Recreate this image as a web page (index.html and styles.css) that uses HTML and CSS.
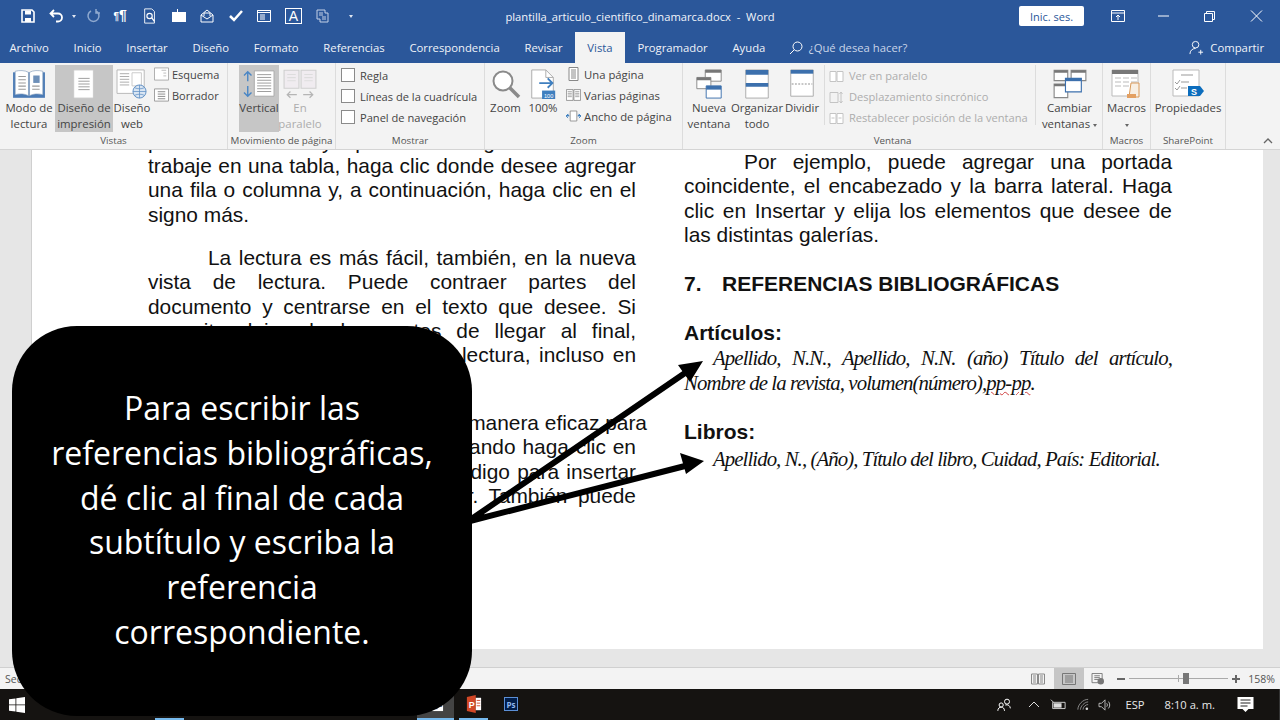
FILE: index.html
```html
<!DOCTYPE html>
<html lang="es">

<head>
    <meta charset="UTF-8">
    <title>plantilla_articulo_cientifico_dinamarca.docx - Word</title>
    <link rel="stylesheet" href="styles.css">
</head>

<body>
    <div class="window">
        <!-- Title bar -->
        <div class="titlebar">
            <div class="qat">
                <svg viewBox="0 0 16 16"><path d="M2 2h10l2 2v10H2z" fill="none" stroke="#fff" stroke-width="1.6"/><path d="M5 2.500h6v4H5zM5 10h6v4H5z" fill="#fff"/></svg>
                <svg viewBox="0 0 16 16"><path d="M5 2 1.500 5.500 5 9M2 5.500h7a4 4 0 0 1 0 8H7" fill="none" stroke="#fff" stroke-width="1.800"/></svg>
                <span class="qat-caret"></span>
                <svg class="dim" viewBox="0 0 16 16"><path d="M6 3a5.500 5.500 0 1 0 5 0M11 1v4h4" fill="none" stroke="#8fa9cf" stroke-width="1.500"/></svg>
                <span class="qat-pilcrow"><i>¶</i>¶</span>
                <svg viewBox="0 0 16 18"><path d="M2 1h8l3 3v13H2z" fill="none" stroke="#fff"/><circle cx="7.500" cy="9" r="3" fill="none" stroke="#fff" stroke-width="1.300"/><path d="m10 11 3 4" stroke="#fff" stroke-width="1.500"/></svg>
                <svg viewBox="0 0 16 16"><path d="M1 4h5V1h1v3h8v10H1z" fill="#fff"/></svg>
                <svg viewBox="0 0 16 16"><path d="M2 7l6-5 6 5v7H2zM2 7l6 4 6-4M5 8V5h6v3" fill="none" stroke="#fff"/></svg>
                <svg viewBox="0 0 16 16"><path d="m2 8 4 4 8-9" fill="none" stroke="#fff" stroke-width="2.500"/></svg>
                <svg viewBox="0 0 16 16"><path d="M1.500 2.500h13v11h-13z" fill="none" stroke="#fff"/><path d="M1.500 2.500h13v2h-13zM4 7h5M4 9h5M4 11h5" fill="none" stroke="#fff"/></svg>
                <span class="qat-letter">A</span>
                <svg class="dim" viewBox="0 0 16 16"><path d="M2 2h8v3h3v9H5v-3H2zM4 5h4M4 7h4M7 9h4M7 11h4" fill="none" stroke="#c4d1e6"/></svg>
                <span class="qat-caret more"></span>
            </div>
            <div class="doc-title">plantilla_articulo_cientifico_dinamarca.docx &nbsp;-&nbsp; Word</div>
            <div class="win-controls">
                <button class="signin">Inic. ses.</button>
                <svg class="win-btn first" viewBox="0 0 14 12"><path d="M.5.500h13v11H.5zM.5 3h13M7 10V5M5 7l2-2 2 2" fill="none" stroke="#fff"/></svg>
                <svg class="win-btn" viewBox="0 0 14 12"><path d="M1 6h11" stroke="#fff"/></svg>
                <svg class="win-btn" viewBox="0 0 14 12"><path d="M1.500 3.500h8v8h-8zM3.500 3.500v-2h8v8h-2" fill="none" stroke="#fff"/></svg>
                <svg class="win-btn" viewBox="0 0 14 12"><path d="m2 .500 11 11M13 .500l-11 11" stroke="#fff"/></svg>
            </div>
        </div>

        <!-- Tabs -->
        <div class="tabs">
            <span class="tab">Archivo</span>
            <span class="tab">Inicio</span>
            <span class="tab">Insertar</span>
            <span class="tab">Diseño</span>
            <span class="tab">Formato</span>
            <span class="tab">Referencias</span>
            <span class="tab">Correspondencia</span>
            <span class="tab">Revisar</span>
            <span class="tab active">Vista</span>
            <span class="tab">Programador</span>
            <span class="tab">Ayuda</span>
            <svg class="search-icon" viewBox="0 0 14 14"><circle cx="8.500" cy="5.500" r="4.500" fill="none" stroke="#fff"/><path d="M5.300 8.700 1 13" stroke="#fff"/></svg>
            <span class="search-text">¿Qué desea hacer?</span>
            <span class="share">
                <svg viewBox="0 0 16 16"><circle cx="7" cy="5" r="3.500" fill="none" stroke="#fff"/><path d="M1 15c0-3.500 2.500-6 6-6M10 13h5M12.500 10.500v5" fill="none" stroke="#fff"/></svg>
                Compartir
            </span>
        </div>

        <!-- Ribbon -->
        <div class="ribbon">
            <div class="group g-vistas">
                <div class="group-body">
                    <div class="big w-52">
                        <svg class="icon" viewBox="0 0 32 28"><path d="M1 3h30v24H1z" fill="#4a7ab5"/><path d="M3 2c4-1 9-1 12.500 1v22C12 23 7 23 3 24zM29 2c-4-1-9-1-12.500 1v22c3.500-2 8.500-2 12.500-1z" fill="#fff" stroke="#7f9ab9" stroke-width=".6"/><path d="M6 7h7M6 10h7M6 13h7M6 16h7M6 19h7" stroke="#999"/><path d="M20 6h6v7h-6z" fill="#6d8fb8"/><path d="M19 16h7M19 19h7" stroke="#999"/></svg>
                        <span class="label">Modo de<br>lectura</span>
                    </div>
                    <div class="big w-58 on">
                        <svg class="icon" viewBox="0 0 32 32"><path d="M5 1h21v30H5z" fill="#fff" stroke="#c9c9c9"/><path d="M10 10h12M10 13h12M10 16h12M10 19h12M10 22h12" stroke="#9a9a9a"/></svg>
                        <span class="label">Diseño de<br>impresión</span>
                    </div>
                    <div class="big w-38">
                        <svg class="icon" viewBox="0 0 34 32"><path d="M1 1h29v25H1z" fill="#fff" stroke="#b5b5b5"/><path d="M17 4h10v14H17z" fill="#fff" stroke="#c9c9c9"/><path d="M4 5h10M4 8h10M4 11h10M4 14h10M4 17h10" stroke="#aaa"/><circle cx="25" cy="24" r="7" fill="#d9e5f2" stroke="#5f8fc4"/><path d="M18 24h14M25 17v14M20 20c3 1.500 7 1.500 10 0M20 28c3-1.500 7-1.500 10 0" fill="none" stroke="#5f8fc4" stroke-width=".8"/></svg>
                        <span class="label">Diseño<br>web</span>
                    </div>
                    <div class="small-col outline-col">
                        <div class="small">
                            <svg viewBox="0 0 16 14"><path d="M.5.500h15v13H.5z" fill="#fff" stroke="#aaa"/><path d="M8 3h5M10 6h3M10 9h3" stroke="#bbb"/></svg>
                            Esquema
                        </div>
                        <div class="small">
                            <svg viewBox="0 0 16 14"><path d="M.5.500h15v13H.5z" fill="#fff" stroke="#999"/><path d="M4 3.500h8M4 6h8M4 8.500h8M4 11h8" stroke="#888"/></svg>
                            Borrador
                        </div>
                    </div>
                </div>
                <div class="group-name">Vistas</div>
            </div>

            <div class="group g-mov">
                <div class="group-body">
                    <div class="big w-40 on">
                        <svg class="icon" viewBox="0 0 36 32"><path d="M13 2h21v27H13z" fill="#fff" stroke="#aaa"/><path d="M16 6h15M16 9h15M16 12h15M16 15h15M16 18h15M16 21h15M16 24h15" stroke="#999"/><path d="M6 13V3M2 7l4-4 4 4" fill="none" stroke="#4a86c5" stroke-width="1.500"/><path d="M6 18v11M2 25l4 4 4-4" fill="none" stroke="#4a86c5" stroke-width="1.500"/></svg>
                        <span class="label">Vertical</span>
                    </div>
                    <div class="big w-42 off">
                        <svg class="icon" viewBox="0 0 32 28"><path d="M1 1h14v17H1zM17 1h14v17H17z" fill="#f0ecf0" stroke="#cfcfcf"/><path d="M4 5h8M4 8h8M4 11h8M20 5h8M20 8h8M20 11h8" stroke="#ddd"/><path d="M4 24h9M7 21l-3 3 3 3M19 24h9M25 21l3 3-3 3" fill="none" stroke="#b5b5b5" stroke-width="1.200"/></svg>
                        <span class="label">En<br>paralelo</span>
                    </div>
                </div>
                <div class="group-name">Movimiento de página</div>
            </div>

            <div class="group g-mostrar">
                <div class="group-body checks">
                    <label class="check"><i></i>Regla</label>
                    <label class="check"><i></i>Líneas de la cuadrícula</label>
                    <label class="check"><i></i>Panel de navegación</label>
                </div>
                <div class="group-name">Mostrar</div>
            </div>

            <div class="group g-zoom">
                <div class="group-body">
                    <div class="big w-37">
                        <svg class="icon" viewBox="0 0 30 30"><circle cx="12" cy="12" r="9.500" fill="#fff" stroke="#8a8a8a" stroke-width="2"/><path d="m19 19 9 9" stroke="#8a8a8a" stroke-width="3.500"/></svg>
                        <span class="label">Zoom</span>
                    </div>
                    <div class="big w-38">
                        <svg class="icon" viewBox="0 0 28 32"><path d="M2 1h15l8 8v22H2z" fill="#fff" stroke="#aaa"/><path d="M17 1v8h8" fill="none" stroke="#aaa"/><path d="M10 15h14M19 10l5 5-5 5" fill="none" stroke="#3f7fbf" stroke-width="2"/><path d="M13 23h14v9H13z" fill="#3f7fbf"/><text x="20" y="30.500" class="zoom-num">100</text></svg>
                        <span class="label">100%</span>
                    </div>
                    <div class="small-col zoom-col">
                        <div class="small">
                            <svg viewBox="0 0 14 14"><path d="M2.500.500h9v13h-9z" fill="#fff" stroke="#888"/><path d="M4.500 3h5M4.500 5h5M4.500 7h5M4.500 9h5M4.500 11h5" stroke="#888"/></svg>
                            Una página
                        </div>
                        <div class="small">
                            <svg viewBox="0 0 18 14"><path d="M.5.500h8v13h-8zM9.500.500h8v13h-8z" fill="#fff" stroke="#888"/><path d="M2 3h5M2 5h5M2 7h5M2 9h5M11 3h5M11 5h5M11 7h5M11 9h5" stroke="#999"/></svg>
                            Varias páginas
                        </div>
                        <div class="small">
                            <svg viewBox="0 0 18 14"><path d="M5 1h8v12H5z" fill="#fff" stroke="#888"/><path d="M4 7H0l2.500-2.500M0 7l2.500 2.500M14 7h4l-2.500-2.500M18 7l-2.500 2.500" fill="#3f7fbf" stroke="#3f7fbf"/></svg>
                            Ancho de página
                        </div>
                    </div>
                </div>
                <div class="group-name">Zoom</div>
            </div>

            <div class="group g-ventana">
                <div class="group-body">
                    <div class="big w-44">
                        <svg class="icon" viewBox="0 0 28 32"><path d="M10 1h17v12H10z" fill="#fff" stroke="#888"/><path d="M10 1h17v3H10z" fill="#777"/><path d="M1 9h15v12H1z" fill="#fff" stroke="#888"/><path d="M1 9h15v3H1z" fill="#777"/><path d="M11 18h16v13H11z" fill="#fff" stroke="#3c70ad"/><path d="M11 18h16v4H11z" fill="#3c70ad"/></svg>
                        <span class="label">Nueva<br>ventana</span>
                    </div>
                    <div class="big w-52">
                        <svg class="icon" viewBox="0 0 26 32"><path d="M1 1h24v30H1z" fill="#fff" stroke="#aaa"/><path d="M1 1h24v5H1zM1 15h24v4H1z" fill="#3c70ad"/></svg>
                        <span class="label">Organizar<br>todo</span>
                    </div>
                    <div class="big w-38">
                        <svg class="icon" viewBox="0 0 26 32"><path d="M1 1h24v28H1z" fill="#fff" stroke="#aaa"/><path d="M1 1h24v4H1z" fill="#3c70ad"/><path d="M2 16h22" stroke="#888" stroke-dasharray="2 1.500"/></svg>
                        <span class="label">Dividir</span>
                    </div>
                    <div class="small-col side-by-side">
                        <div class="small off">
                            <svg viewBox="0 0 14 14"><path d="M.5 2.500h6v10h-6zM7.500 2.500h6v10h-6z" fill="#fff" stroke="#c4c4c4"/></svg>
                            Ver en paralelo
                        </div>
                        <div class="small off">
                            <svg viewBox="0 0 14 14"><path d="M.5 2.500h8v10h-8zM11.500 2v11M10 4l1.500-2L13 4M10 11l1.500 2 1.500-2" fill="none" stroke="#c4c4c4"/></svg>
                            Desplazamiento sincrónico
                        </div>
                        <div class="small off">
                            <svg viewBox="0 0 14 14"><path d="M.5 2.500h6v10h-6zM7.500 2.500h6v10h-6zM2 7h3M12 7H9" fill="#fff" stroke="#c4c4c4"/></svg>
                            Restablecer posición de la ventana
                        </div>
                    </div>
                    <div class="big w-65 switch">
                        <svg class="icon" viewBox="0 0 30 26"><path d="M1 1h12v9H1zM16 1h13v9H16zM1 13h12v12H1z" fill="#fff" stroke="#888"/><path d="M1 1h12v2H1zM16 1h13v2H16zM1 13h12v2H1z" fill="#777"/><path d="M11 8h14v12H11z" fill="#fff" stroke="#3c70ad"/><path d="M11 8h14v2.500H11z" fill="#3c70ad"/></svg>
                        <span class="label">Cambiar<br>ventanas <b class="caret"></b></span>
                    </div>
                </div>
                <div class="group-name">Ventana</div>
            </div>

            <div class="group g-macros">
                <div class="group-body">
                    <div class="big w-48">
                        <svg class="icon" viewBox="0 0 32 30"><path d="M1 1h26v26H1z" fill="#fff" stroke="#bbb"/><path d="M1 1h26v4H1z" fill="#777"/><path d="M4 9h6M12 9h6M20 9h6M4 13h6M12 13h6M20 13h6M4 17h6M12 17h6" stroke="#bbb"/><path d="M20 14h8v14h-10z" fill="#f7efe4" stroke="#d99a5a"/><path d="M16 25h9v4h-9z" fill="#e3a062"/></svg>
                        <span class="label">Macros<br><b class="caret"></b></span>
                    </div>
                </div>
                <div class="group-name">Macros</div>
            </div>

            <div class="group g-share">
                <div class="group-body">
                    <div class="big w-66">
                        <svg class="icon" viewBox="0 0 32 30"><path d="M1 1h26v26H1z" fill="#fff" stroke="#bbb"/><path d="M9 6h12M9 13h8M9 19h6M3 13l2 2 3-4M3 19l2 2 3-4" fill="none" stroke="#999"/><path d="M16 17h12l4 5-4 5H16z" fill="#0c6dbd"/><text x="22" y="26" class="sp-letter">S</text></svg>
                        <span class="label">Propiedades</span>
                    </div>
                </div>
                <div class="group-name">SharePoint</div>
            </div>

            <svg class="collapse" viewBox="0 0 10 6"><path d="m1 5 4-4 4 4" fill="none" stroke="#666" stroke-width="1.300"/></svg>
        </div>

        <!-- Document -->
        <div class="doc-area">
            <div class="page">
                <div class="col col-left">
                    <div class="ln">puede hacer clic y aparecerá un gráfico. Cuando</div>
                    <div class="ln">trabaje en una tabla, haga clic donde desee agregar</div>
                    <div class="ln">una fila o columna y, a continuación, haga clic en el</div>
                    <div class="ln end">signo más.</div>
                    <div class="ln first para">La lectura es más fácil, también, en la nueva</div>
                    <div class="ln">vista de lectura. Puede contraer partes del</div>
                    <div class="ln">documento y centrarse en el texto que desee. Si</div>
                    <div class="ln">necesita dejar de leer antes de llegar al final,</div>
                    <div class="ln">Word le recuerda dónde dejó la lectura, incluso en</div>
                    <div class="ln end">otro dispositivo.</div>
                    <div class="ln first para">El vídeo le proporciona una manera eficaz para</div>
                    <div class="ln">ayudarle a demostrar el punto. Cuando haga clic en</div>
                    <div class="ln">Vídeo en línea, puede pegar el código para insertar</div>
                    <div class="ln">para el vídeo que desea agregar. También puede</div>
                </div>
                <div class="col col-right">
                    <div class="ln first">Por ejemplo, puede agregar una portada</div>
                    <div class="ln">coincidente, el encabezado y la barra lateral. Haga</div>
                    <div class="ln">clic en Insertar y elija los elementos que desee de</div>
                    <div class="ln end">las distintas galerías.</div>
                    <h2 class="heading"><span class="heading-num">7.</span>REFERENCIAS BIBLIOGRÁFICAS</h2>
                    <h3 class="subheading">Artículos:</h3>
                    <div class="ref ref-first">Apellido, N.N., Apellido, N.N. (año) Título del artículo,</div>
                    <div class="ref ref-tight">Nombre de la revista, volumen(número),<span class="squiggle">pp-pp</span>.</div>
                    <h3 class="subheading books">Libros:</h3>
                    <div class="ref ref-book">Apellido, N., (Año), Título del libro, Cuidad, País: Editorial.</div>
                </div>
            </div>
        </div>

        <!-- Status bar -->
        <div class="statusbar">
            <span class="status-left">Sección: 2</span>
            <div class="status-right">
                <svg class="view" viewBox="0 0 14 12"><path d="M.5 1h6v10h-6zM7.500 1h6v10h-6zM2 3h3M2 5h3M2 7h3M2 9h3M9 3h3M9 5h3M9 7h3M9 9h3" fill="none" stroke="#8a8a8a"/></svg>
                <span class="view-on"><svg class="view" viewBox="0 0 14 12"><path d="M.5.500h13v11H.5zM3 3h8M3 5h8M3 7h8M3 9h8" fill="none" stroke="#777"/></svg></span>
                <svg class="view" viewBox="0 0 14 13"><path d="M.5.500h11v10H.5zM3 3h6M3 5h6M3 7h4" fill="none" stroke="#777"/><circle cx="10" cy="9" r="3.500" fill="#777"/></svg>
                <div class="zoom-slider">
                    <span class="zoom-minus"></span>
                    <span class="zoom-track"><i class="zoom-tick"></i><i class="zoom-thumb"></i></span>
                    <span class="zoom-plus"></span>
                </div>
                <span class="zoom-value">158%</span>
            </div>
        </div>

        <!-- Taskbar -->
        <div class="taskbar">
            <svg class="start" viewBox="0 0 16 16"><path d="M0 2.300 6.500 1.400V7.500H0zM7.300 1.300 16 0v7.500H7.300zM0 8.300h6.500v6.300L0 13.700zM7.300 8.300H16V16l-8.700-1.300z" fill="#fff"/></svg>
            <div class="task-items">
                <span class="task task-first"></span>
                <span class="task task-word">
                    <svg viewBox="0 0 18 18"><path d="M5 1h12v16H5z" fill="#fff"/><path d="M0 3h11v12H0z" fill="#2b579a"/><path d="M12 6h4M12 9h4M12 12h4" stroke="#2b579a"/></svg>
                </span>
                <span class="task task-ppt">
                    <svg viewBox="0 0 18 20"><path d="M1 2 11 0v20L1 18z" fill="#d24726"/><path d="M11 3h6v14h-6z" fill="#fff"/><path d="M12 6h4M12 9h4M12 12h4" stroke="#d24726"/><text x="3" y="14" class="ppt-letter">P</text></svg>
                </span>
                <span class="task task-ps">Ps</span>
            </div>
            <div class="tray">
                <svg class="tray-people" viewBox="0 0 18 16"><circle cx="12" cy="4" r="3" fill="none" stroke="#fff" stroke-width="1.200"/><circle cx="5" cy="8" r="2.500" fill="none" stroke="#fff" stroke-width="1.200"/><path d="M1 15c0-3 2-4.500 4-4.500s4 1.500 4 4.500M10 8c3-1 6 1 6 4" fill="none" stroke="#fff" stroke-width="1.200"/></svg>
                <svg class="tray-chev" viewBox="0 0 12 7"><path d="m1 6 5-5 5 5" fill="none" stroke="#ddd"/></svg>
                <svg class="tray-batt" viewBox="0 0 18 12"><path d="M3 3h14v7H3z" fill="none" stroke="#ddd"/><path d="M4 4h9v5H4z" fill="#ddd"/><path d="M1 0l3 3" stroke="#ddd"/></svg>
                <svg class="tray-wifi" viewBox="0 0 14 14"><path d="M1 13C1 7 7 1 13 1M4 13c0-4 5-9 9-9M7 13c0-3 3-6 6-6" fill="none" stroke="#999"/><circle cx="11.500" cy="12" r="1.500" fill="#ddd"/></svg>
                <svg class="tray-vol" viewBox="0 0 16 14"><path d="M1 5h3l4-4v12L4 9H1zM10 5c1 1 1 3 0 4M12 3c2 2 2 6 0 8" fill="none" stroke="#ccc"/></svg>
                <span class="tray-lang">ESP</span>
                <span class="tray-time">8:10 a. m.</span>
                <svg class="tray-note" viewBox="0 0 16 15"><path d="M0 0h16v12h-5l-3 3-3-3H0z" fill="#fff"/><path d="M3 3h10M3 6h10M3 9h7" stroke="#222"/></svg>
            </div>
        </div>

        <!-- Callout over the page -->
        <div class="callout">Para escribir las referencias bibliográficas, dé clic al final de cada subtítulo y escriba la referencia correspondiente.</div>
        <svg class="arrows" viewBox="0 0 1280 720">
            <path d="M470 520 685 373M470 521 685 466" stroke="#000" stroke-width="6"/>
            <path d="m703 361-13 21-12-17zM704 461l-18 13-6-21z" fill="#000"/>
        </svg>
    </div>
</body>

</html>
```

FILE: styles.css
```css
* {
    margin: 0;
    padding: 0;
    box-sizing: border-box;
}

body {
    font-family: "Open Sans", "Noto Sans", sans-serif;
    background-color: #e6e6e6;
    overflow: hidden;
}

.window {
    position: relative;
    width: 1280px;
    height: 720px;
    display: flex;
    flex-direction: column;
    overflow: hidden;
}

/* Title bar */
.titlebar {
    height: 32px;
    background-color: #2b579a;
    color: #fff;
    display: grid;
    grid-template-columns: 1fr auto 1fr;
    align-items: center;
}

.qat {
    display: flex;
    align-items: center;
    padding-left: 20px;
    gap: 12.6px;
}

.qat svg {
    width: 16px;
    height: 16px;
}

.qat-caret {
    width: 0;
    height: 0;
    border: 2.5px solid transparent;
    border-top: 3px solid #dfe6f1;
    margin: 3px -4px 0 -5px;
}

.qat-caret.more {
    margin-left: 6px;
}

.qat-pilcrow {
    width: 16px;
    font-family: "Liberation Sans", sans-serif;
    font-size: 14px;
    font-weight: 700;
    line-height: 16px;
    white-space: nowrap;
}

.qat-pilcrow i {
    font-size: 10px;
    font-style: normal;
}

.qat-letter {
    width: 17px;
    height: 16px;
    border: 1px solid #fff;
    font-family: "Liberation Sans", sans-serif;
    font-size: 14px;
    line-height: 14px;
    text-align: center;
}

.doc-title {
    font-size: 11.2px;
    white-space: nowrap;
    color: #f2f5fa;
}

.win-controls {
    display: flex;
    align-items: center;
    justify-content: flex-end;
}

.signin {
    width: 65px;
    height: 20px;
    border: none;
    border-radius: 2px;
    background-color: #fff;
    color: #2b579a;
    font-family: inherit;
    font-size: 11px;
    margin-right: 27px;
}

.win-btn {
    width: 14px;
    height: 12px;
    margin-right: 32px;
}

.win-btn:last-child {
    margin-right: 17px;
}

/* Tabs */
.tabs {
    height: 31px;
    background-color: #2b579a;
    color: #f0f3f8;
    display: flex;
    align-items: stretch;
    font-size: 11.3px;
    line-height: 31px;
}

.tab {
    padding: 0 12.4px;
    white-space: nowrap;
}

.tab:first-child {
    margin-left: -3px;
}

.tab.active {
    background-color: #f3f3f3;
    color: #2b579a;
}

.search-icon {
    width: 14px;
    height: 14px;
    margin: 9px 0 0 11px;
}

.search-text {
    margin-left: 6px;
    color: #c9d5e8;
}

.share {
    margin-left: auto;
    margin-right: 16px;
    display: flex;
    align-items: center;
    gap: 6px;
}

.share svg {
    width: 15px;
    height: 15px;
}

/* Ribbon */
.ribbon {
    position: relative;
    height: 87px;
    display: flex;
    background-color: #f3f3f3;
    border-bottom: 1px solid #d4d4d4;
    color: #444;
    font-size: 11.4px;
}

.group {
    display: flex;
    flex-direction: column;
    height: 86px;
    padding-top: 2px;
    border-right: 1px solid #dcdcdc;
}

.g-vistas { width: 228px; }
.g-mov { width: 108px; }
.g-mostrar { width: 149px; }
.g-zoom { width: 198px; }
.g-ventana { width: 420px; }
.g-macros { width: 48px; }
.g-share { width: 75px; }

.group-body {
    flex: 1;
    display: flex;
    min-height: 0;
}

.g-vistas .group-body { padding-left: 3px; }
.g-mov .group-body { padding-left: 11px; }
.g-zoom .group-body { padding-left: 2px; }
.g-ventana .group-body { padding-left: 4px; }
.g-share .group-body { padding-left: 4px; }

.group-name {
    height: 15px;
    font-size: 9.8px;
    line-height: 14px;
    text-align: center;
    color: #555;
    white-space: nowrap;
}

.big {
    display: flex;
    flex-direction: column;
    align-items: center;
    text-align: center;
    height: 67px;
    padding-top: 4px;
}

.big .icon {
    flex-shrink: 0;
    height: 30px;
    width: 34px;
    margin-bottom: 1px;
}

.label {
    line-height: 16px;
    white-space: nowrap;
}

.big.on {
    background-color: #c6c6c6;
}

.off {
    color: #adadad;
}

.w-37 { width: 37px; }
.w-38 { width: 38px; }
.w-40 { width: 40px; }
.w-42 { width: 42px; }
.w-44 { width: 44px; }
.w-48 { width: 48px; }
.w-52 { width: 52px; }
.w-58 { width: 58px; }
.w-65 { width: 65px; }
.w-66 { width: 66px; }

.caret {
    display: inline-block;
    border: 2.5px solid transparent;
    border-top: 3px solid #666;
    vertical-align: -1px;
}

.small-col {
    display: flex;
    flex-direction: column;
    gap: 5px;
    padding-top: 1px;
}

.small {
    display: flex;
    align-items: center;
    gap: 3px;
    height: 16px;
    white-space: nowrap;
}

.small svg {
    width: 15px;
    height: 14px;
    flex-shrink: 0;
}

.outline-col {
    margin-left: 3px;
    font-size: 11px;
}

.zoom-col {
    margin-left: 4px;
    font-size: 11.3px;
}

.side-by-side {
    width: 212px;
    margin-left: 3px;
    padding: 3px 0 0 4px;
    border-right: 1px solid #dcdcdc;
    border-left: 1px solid #dcdcdc;
    height: 60px;
    gap: 6px;
    font-size: 11.1px;
}

.side-by-side .small {
    gap: 5px;
}

.switch {
    margin-left: 1px;
}

.checks {
    flex-direction: column;
    gap: 5px;
    padding: 2px 0 0 5px;
    font-size: 11.1px;
}

.check {
    display: flex;
    align-items: center;
    gap: 5px;
    height: 16px;
    white-space: nowrap;
}

.check i {
    width: 14px;
    height: 14px;
    background-color: #fff;
    border: 1px solid #8a8a8a;
}

.zoom-num {
    fill: #fff;
    font-family: "Liberation Sans", sans-serif;
    font-size: 6px;
    text-anchor: middle;
}

.sp-letter {
    fill: #fff;
    font-family: "Liberation Sans", sans-serif;
    font-size: 9px;
    font-weight: 700;
    text-anchor: middle;
}

.collapse {
    position: absolute;
    right: 7px;
    bottom: 5px;
    width: 10px;
    height: 6px;
}

/* Document */
.doc-area {
    flex: 1;
    min-height: 0;
    background-color: #e6e6e6;
    padding: 0 17px 18px 31px;
    border-bottom: 1px solid #d0d0d0;
}

.page {
    height: 100%;
    background-color: #fff;
    border-left: 1px solid #cfcfcf;
    display: flex;
    gap: 48px;
    padding-left: 116px;
    overflow: hidden;
    font-family: "Liberation Sans", sans-serif;
    font-size: 20.9px;
    line-height: 24.4px;
    color: #111;
}

.col {
    width: 488px;
    flex-shrink: 0;
}

.col-left {
    margin-top: -20.4px;
}

.ln {
    text-align: justify;
    text-align-last: justify;
    white-space: nowrap;
}

.ln.end {
    text-align-last: left;
}

.ln.first {
    text-indent: 60px;
}

.ln.para {
    margin-top: 18.6px;
}

.heading {
    font-size: 21px;
    line-height: 24.4px;
    margin-top: 24px;
    white-space: nowrap;
}

.heading-num {
    display: inline-block;
    width: 38px;
}

.subheading {
    font-size: 21px;
    line-height: 24.4px;
    margin-top: 25px;
}

.subheading.books {
    margin-top: 25px;
}

.ref {
    font-family: "Liberation Serif", serif;
    font-style: italic;
    font-size: 20.8px;
    line-height: 25px;
    white-space: nowrap;
}

.ref-first {
    text-align: justify;
    text-align-last: justify;
    text-indent: 29px;
    letter-spacing: -0.9px;
}

.ref-tight {
    letter-spacing: -0.89px;
}

.ref-book {
    margin-top: 1px;
    text-indent: 29px;
    letter-spacing: -0.92px;
}

.squiggle {
    text-decoration: underline wavy #d04040 1px;
    text-underline-offset: 1px;
}

/* Status bar */
.statusbar {
    height: 21px;
    background-color: #f3f3f3;
    display: flex;
    align-items: center;
    justify-content: space-between;
    font-size: 10.5px;
    color: #555;
    padding-left: 5px;
}

.status-right {
    display: flex;
    align-items: center;
    height: 100%;
}

.view {
    width: 14px;
    height: 12px;
    margin: 0 9px;
}

.view-on {
    width: 30px;
    height: 100%;
    background-color: #c6c6c6;
    display: flex;
    align-items: center;
    justify-content: center;
    margin-right: -2px;
}

.view-on .view {
    margin: 0;
}

.zoom-slider {
    display: flex;
    align-items: center;
    gap: 4px;
    margin-left: 3px;
    width: 128px;
}

.zoom-minus {
    width: 8px;
    height: 2px;
    background-color: #666;
}

.zoom-track {
    position: relative;
    width: 99px;
    height: 1px;
    background-color: #aaa;
}

.zoom-tick {
    position: absolute;
    left: 49px;
    top: -3px;
    width: 1px;
    height: 7px;
    background-color: #aaa;
}

.zoom-thumb {
    position: absolute;
    left: 54px;
    top: -5px;
    width: 6px;
    height: 11px;
    background-color: #777;
}

.zoom-plus {
    position: relative;
    width: 8px;
    height: 2px;
    background-color: #666;
}

.zoom-plus::after {
    content: "";
    position: absolute;
    left: 3px;
    top: -3px;
    width: 2px;
    height: 8px;
    background-color: #666;
}

.zoom-value {
    width: 35px;
    text-align: right;
    padding-right: 5px;
    font-size: 10.5px;
}

/* Taskbar */
.taskbar {
    position: relative;
    height: 31px;
    background-color: #151311;
    display: flex;
    align-items: center;
    color: #e8e8e8;
    font-size: 11.2px;
}

.start {
    width: 16px;
    height: 16px;
    margin-left: 9px;
}

.task-items {
    display: flex;
    height: 100%;
    margin-left: 130px;
}

.task {
    height: 100%;
    display: flex;
    align-items: center;
    justify-content: center;
    border-bottom: 2px solid #76b9ed;
}

.task-first {
    width: 29px;
    margin-right: 233px;
}

.task-word {
    width: 37px;
    background-color: #444;
    margin-right: 5px;
}

.task-word svg {
    width: 17px;
    height: 17px;
}

.task-ppt {
    width: 29px;
}

.task-ppt svg {
    width: 16px;
    height: 18px;
}

.ppt-letter {
    fill: #fff;
    font-family: "Liberation Sans", sans-serif;
    font-size: 10px;
    font-weight: 700;
}

.task-ps {
    width: 14px;
    height: 14px;
    margin: 8px 0 0 16px;
    border: 1px solid #5b8fd6;
    background-color: #001d4a;
    color: #8fb8ee;
    font-size: 8px;
    font-weight: 700;
}

.tray {
    margin-left: auto;
    display: flex;
    align-items: center;
    height: 100%;
    padding-right: 5px;
    border-right: 1px solid #333;
}

.tray-people { width: 15px; height: 14px; margin-right: 16px; }
.tray-chev { width: 12px; height: 7px; margin-right: 10px; }
.tray-batt { width: 16px; height: 12px; margin-right: 11px; }
.tray-wifi { width: 12px; height: 13px; margin-right: 9px; }
.tray-vol { width: 14px; height: 12px; margin-right: 14px; }
.tray-lang { margin-right: 20px; }
.tray-time { margin-right: 22px; }
.tray-note { width: 17px; height: 15px; margin-right: 20px; }

/* Callout */
.callout {
    position: absolute;
    left: 12px;
    top: 326px;
    width: 460px;
    height: 390px;
    padding: 60px 34px 0;
    background-color: #000;
    border-radius: 65px;
    color: #fff;
    font-size: 32px;
    line-height: 44.8px;
    text-align: center;
}

.arrows {
    position: absolute;
    inset: 0;
    width: 1280px;
    height: 720px;
    pointer-events: none;
}
```
